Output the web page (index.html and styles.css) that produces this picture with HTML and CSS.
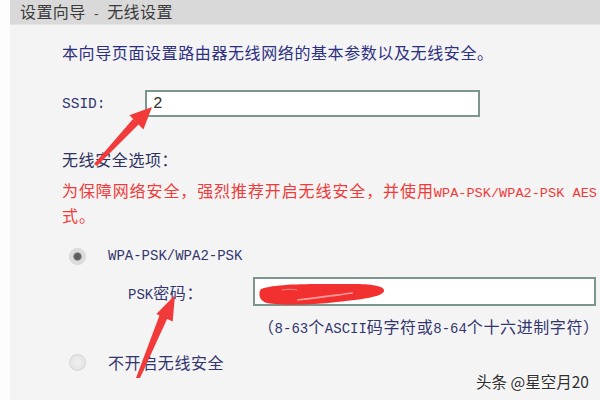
FILE: index.html
```html
<!DOCTYPE html>
<html lang="zh-CN">
<head>
<meta charset="utf-8">
<title>设置向导 - 无线设置</title>
<link rel="stylesheet" href="styles.css">
</head>
<body>
<div class="page">
  <div class="strip"></div>
  <div class="panel">
    <div class="header">设置向导<span class="m dash"> - </span>无线设置</div>
    <div class="content">
      <div class="intro">本向导页面设置路由器无线网络的基本参数以及无线安全。</div>
      <div class="ssid-row">
        <span class="label-ssid m">SSID:</span>
        <div class="input ssid-input"><span class="m">2</span></div>
      </div>
      <div class="sec-title">无线安全选项：</div>
      <div class="warn nowrap">为保障网络安全，强烈推荐开启无线安全，并使用<span class="m wm">WPA-PSK/WPA2-PSK AES</span></div>
      <div class="warn">式。</div>
      <div class="radio-row">
        <span class="radio checked"></span>
        <span class="radio-label m">WPA-PSK/WPA2-PSK</span>
      </div>
      <div class="psk-row">
        <span class="psk-label"><span class="m">PSK</span>密码：</span>
        <div class="input psk-input">
          <svg class="scribble" width="130" height="26" viewBox="0 0 130 26">
            <path d="M4 8 C20 2 60 3 95 3 C115 3 128 5 127 10 C126 15 110 18 80 21 C55 24 25 25 10 22 C2 20 1 12 4 8 Z" fill="#f2302f"/>
            <path d="M40 19 C60 17 80 14 96 12" stroke="#ff9c9c" stroke-width="1.6" fill="none"/>
            <path d="M25 9 C30 8 36 8 40 9" stroke="#ff8888" stroke-width="1" fill="none"/>
          </svg>
        </div>
      </div>
      <div class="hint">（<span class="m">8-63</span>个<span class="m">ASCII</span>码字符或<span class="m">8-64</span>个十六进制字符）</div>
      <div class="radio-row second">
        <span class="radio"></span>
        <span class="radio-label">不开启无线安全</span>
      </div>
    </div>
  </div>
</div>
<svg class="arrows" width="600" height="400" viewBox="0 0 600 400">
  <polygon points="94,164 97,166 139,124 133,119" fill="#f23a3a"/>
  <polygon points="152,107 129.4,115.3 143.4,129.5" fill="#f23a3a"/>
  <polygon points="136,378 140,378 168,317 160,314" fill="#f23a3a"/>
  <polygon points="175,295 156.3,313.9 172.7,321.5" fill="#f23a3a"/>
</svg>
<div class="watermark">头条 @星空月20</div>
</body>
</html>
```
FILE: styles.css
```css
html, body {
  margin: 0;
  padding: 0;
  width: 600px;
  height: 400px;
  overflow: hidden;
  background: #fbfbfb;
}
body {
  font-family: "Noto Sans CJK SC", "DejaVu Sans", sans-serif;
  font-size: 16px;
  letter-spacing: 0.6px;
}
.m {
  font-family: "Liberation Mono", "DejaVu Sans Mono", monospace;
  font-size: 14px;
  letter-spacing: 0;
  white-space: pre;
}
.page {
  display: flex;
  height: 400px;
}
.strip {
  width: 10px;
  background: #fdfdfd;
}
.panel {
  flex: 1;
  background: #f4f4f4;
  overflow: hidden;
}
.header {
  height: 25px;
  line-height: 22px;
  background: #d9d9d9;
  border-bottom: 1px solid #e4e4e4;
  box-sizing: border-box;
  padding-left: 10px;
  color: #3a3a3a;
  font-size: 16px;
  letter-spacing: 0.4px;
}
.dash {
  font-size: 12px;
}
.content {
  padding-left: 52px;
}
.intro {
  margin-top: 14px;
  height: 26px;
  line-height: 26px;
  color: #2d3080;
  white-space: nowrap;
}
.ssid-row {
  margin-top: 25px;
  display: flex;
  align-items: center;
  height: 27px;
  color: #33366e;
}
.label-ssid {
  width: 83px;
  font-size: 14.5px;
}
.input {
  box-sizing: border-box;
  background: #ffffff;
  border: 2px solid #7e948f;
  display: flex;
  align-items: center;
}
.ssid-input {
  width: 335px;
  height: 27px;
  padding-left: 6px;
  color: #333;
}
.ssid-input .m {
  font-size: 16px;
}
.sec-title {
  margin-top: 30px;
  height: 24px;
  line-height: 24px;
  color: #2f3160;
}
.warn {
  height: 25px;
  line-height: 25px;
  color: #f23a3a;
  letter-spacing: 0.9px;
}
.wm {
  font-size: 13.6px;
}
.nowrap {
  margin-top: 7px;
  white-space: nowrap;
}
.radio-row {
  margin-top: 16px;
  height: 24px;
  display: flex;
  align-items: center;
  color: #33366e;
}
.radio-row.second {
  margin-top: 13px;
}
.radio {
  width: 17px;
  height: 17px;
  margin-left: 7px;
  margin-right: 22px;
  border-radius: 50%;
  box-sizing: border-box;
  border: 1px solid #d4d4d4;
  background: radial-gradient(circle at 50% 50%, #f0f0f0 0, #e0e0e0 100%);
  flex: none;
}
.radio.checked {
  background: radial-gradient(circle at 50% 50%, #555555 0, #666666 3.5px, #d8d8d8 4.5px, #e8e8e8 100%);
}
.psk-row {
  margin-top: 9px;
  height: 29px;
  display: flex;
  align-items: center;
  color: #33366e;
}
.psk-label {
  margin-left: 66px;
  width: 125px;
  white-space: nowrap;
}
.psk-input {
  position: relative;
  width: 343px;
  height: 29px;
  flex: none;
}
.scribble {
  position: absolute;
  left: 2px;
  top: 2px;
  filter: blur(0.6px);
}
.hint {
  margin-top: 9px;
  height: 22px;
  line-height: 22px;
  padding-left: 196px;
  color: #33366e;
  white-space: nowrap;
}
.arrows {
  position: absolute;
  left: 0;
  top: 0;
}
.watermark {
  position: absolute;
  left: 476px;
  top: 369px;
  font-family: "Noto Sans CJK SC", "Noto Sans", sans-serif;
  font-size: 15.5px;
  line-height: 24px;
  letter-spacing: 0;
  color: #2e2e2e;
  text-shadow: 0 0 2px #ffffff, 0 0 2px #ffffff;
}
```
